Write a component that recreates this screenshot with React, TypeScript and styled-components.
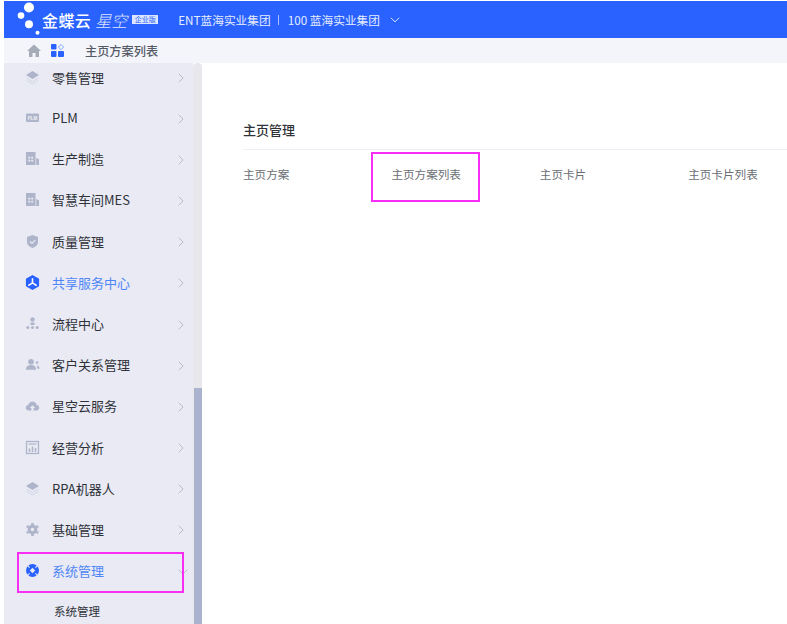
import React from "react";
import styled, { createGlobalStyle } from "styled-components";

const Global = createGlobalStyle`
  html, body { margin: 0; padding: 0; background: #fff; }
  body { font-family: "Noto Sans CJK SC", "Noto Sans", sans-serif; }
  * { box-sizing: border-box; }
`;

const Page = styled.div`
  width: 787px; height: 624px; overflow: hidden; background: #fff;
  padding: 1px 0 0 4px; display: flex; flex-direction: column; position: relative;
`;
const Header = styled.header`
  height: 37px; flex: none; background: #2962ff; color: #fff;
  display: flex; align-items: center; padding-left: 12px;
`;
const LogoMark = styled.svg`width: 26px; height: 35px; flex: none;`;
const Brand = styled.span`font-size: 16px; font-weight: 500; letter-spacing: .4px;`;
const BrandLight = styled.span`font-size: 16px; font-weight: 300; font-style: italic; opacity: .85; margin-left: 4px;`;
const Edition = styled.span`
  font-size: 7px; line-height: 9px; background: #dce6ff; color: #2962ff;
  margin-left: 5px; width: 26px; text-align: center; white-space: nowrap;
`;
const Org = styled.span`font-size: 11.7px; margin-left: 20px; display: flex; align-items: center; white-space: nowrap; color: #e6edff;`;
const Sep = styled.span`width: 1px; height: 10px; background: #a9c1fb; margin: 0 9px 0 7px;`;
const OrgCaret = styled.svg`width: 10px; height: 6px; margin-left: 10px;`;
const Crumb = styled.div`
  height: 25px; flex: none; background: #f4f5fa; display: flex; align-items: center; padding-left: 23px;
`;
const HomeIcon = styled.svg`width: 14px; height: 13px;`;
const AppsIcon = styled.svg`width: 13px; height: 13px; margin-left: 10px;`;
const CrumbText = styled.span`font-size: 12.2px; font-weight: 500; color: #555b66; margin-left: 21px;`;
const Body = styled.div`flex: 1; display: flex; min-height: 0;`;
const Sidebar = styled.nav`
  width: 189px; flex: none; background: #e9eaf4; overflow: hidden; padding-left: 21px;
`;
const Row = styled.div<{ $active?: boolean }>`
  height: 41.2px; display: flex; align-items: center; font-size: 13px;
  color: ${(p) => (p.$active ? "#4f86f7" : "#2f3238")};
`;
const FirstRow = styled(Row)`height: 34px; padding-bottom: 6px;`;
const IconBox = styled.span`width: 27px; flex: none; display: flex; align-items: center;`;
const Label = styled.span`flex: 1; white-space: nowrap;`;
const Chevron = styled.svg`width: 6px; height: 10px; flex: none; margin: 2px 9px 0 0;`;
const ChevronDown = styled.svg`width: 10px; height: 6px; flex: none; margin: 2px 5px 0 0;`;
const Sub = styled.div`font-size: 11.5px; color: #2f3238; padding-left: 29px; margin-top: 12px;`;
const Track = styled.div`
  width: 9px; flex: none; background: #e8e8ec; border-radius: 4px 4px 0 0; position: relative;
`;
const Thumb = styled.div`position: absolute; left: 1px; right: 0; top: 325px; bottom: 0; background: #a9b3cd;`;
const Main = styled.main`flex: 1; padding: 50px 0 0 41px; min-width: 0;`;
const Title = styled.h2`
  margin: 0; height: 37px; font-size: 13px; font-weight: 500; color: #2f3238; line-height: 34px;
  border-bottom: 1.5px solid #eceef5;
`;
const Tabs = styled.div`display: grid; grid-template-columns: repeat(4, 148.4px); margin-top: 16px;`;
const Tab = styled.div`font-size: 11.6px; color: #6a6d73; line-height: 16px; white-space: nowrap;`;
const Frame = styled.div<{ $x: number; $y: number; $w: number; $h: number }>`
  position: absolute; left: ${(p) => p.$x}px; top: ${(p) => p.$y}px;
  width: ${(p) => p.$w}px; height: ${(p) => p.$h}px; border: 2.5px solid #f92ef5; pointer-events: none;
`;

const c = "#aeb5ca";
const blue = "#2962ff";
const Ic = styled.svg`width: 15px; height: 15px; display: block;`;
const Layers = () => (
  <Ic viewBox="0 0 15 15"><path d="M7.5 1 14 5l-6.500 4L1 5z" fill={c}/><path d="M1.500 8l6 3.600L13.500 8M1.500 10.500l6 3.600 6-3.600" fill="none" stroke="#d2d6e4" strokeWidth="1"/></Ic>
);
const Plm = () => (
  <Ic viewBox="0 0 15 15"><rect x="1" y="3.500" width="13" height="8.500" rx="1" fill={c}/><text x="7.500" y="9.500" textAnchor="middle" fontSize="4.500" fontFamily="Liberation Sans, sans-serif" fontWeight="700" fill="#f1f2f8">PLM</text></Ic>
);
const Factory = () => (
  <Ic viewBox="0 0 15 15"><path d="M1 1h9.500v13H1zM11.200 7l2.800 1.200V14h-2.800z" fill={c}/><path d="M3.200 5.800h2v1.800h-2zM6.200 5.800h2v1.800h-2zM3.200 8.800h2v1.800h-2zM6.200 8.800h2v1.800h-2z" fill="#e9eaf4"/></Ic>
);
const Shield = () => (
  <Ic viewBox="0 0 15 15"><path d="M7.500 1 13 3v5c0 3-2.500 5-5.500 6C4.500 13 2 11 2 8V3z" fill={c}/><path d="m5 7.500 2 2 3.200-3.400" fill="none" stroke="#e9eaf4" strokeWidth="1.200"/></Ic>
);
const Shared = () => (
  <Ic viewBox="0 0 15 15"><path d="M7.500.8 13.400 4.200v6.600L7.500 14.200 1.600 10.800V4.200z" fill={blue} stroke={blue} strokeWidth="1.400" strokeLinejoin="round"/><path d="M7.500 3.200v4.600M7.500 7.800 3.300 10.600M7.500 7.800l4.200 2.800" stroke="#fff" strokeWidth="1.600" fill="none"/></Ic>
);
const Flow = () => (
  <Ic viewBox="0 0 15 15"><circle cx="7.500" cy="3.500" r="2.200" fill={c}/><path d="M5.500 6.500h4v2.500h-4z" fill={c}/><circle cx="2.800" cy="11.500" r="1.500" fill={c}/><circle cx="7.500" cy="11.500" r="1.500" fill={c}/><circle cx="12.200" cy="11.500" r="1.500" fill={c}/></Ic>
);
const People = () => (
  <Ic viewBox="0 0 15 15"><circle cx="6" cy="4.800" r="2.800" fill={c}/><path d="M.8 12.800c0-3.200 2-4.800 5.200-4.800s5.200 1.600 5.200 4.800z" fill={c}/><circle cx="12" cy="5.500" r="1.300" fill={c}/><path d="M12 8.300c1.400.4 2.500 1.700 2.500 3.500H12.400z" fill={c}/></Ic>
);
const Cloud = () => (
  <Ic viewBox="0 0 15 15"><path d="M3.600 12.500C1.800 12.500.8 11.200.8 9.700.8 8.200 2 7 3.300 7c.5-2.200 2.200-3.500 4.200-3.500S11.200 4.800 11.600 7c1.500 0 2.600 1.200 2.600 2.700 0 1.500-1.100 2.800-2.700 2.800z" fill={c}/><path d="M7.500 7.200 10.300 10H8.600v2.800H6.400V10H4.700z" fill="#e9eaf4"/></Ic>
);
const Chart = () => (
  <Ic viewBox="0 0 15 15"><rect x="1.500" y="1.500" width="12" height="12" fill="none" stroke={c} strokeWidth="1.300"/><path d="M3.500 4h8" stroke={c} strokeWidth="1.200"/><path d="M4.500 12V8.500M7.500 12V6.500M10.500 12V8" stroke={c} strokeWidth="1.500"/></Ic>
);
const Gear = () => (
  <Ic viewBox="0 0 15 15"><circle cx="7.500" cy="7.500" r="3.300" fill="none" stroke={c} strokeWidth="3"/><path d="M7.500 1v2M7.500 12v2M1.800 4.200l1.700 1M11.500 9.800l1.700 1M1.800 10.800l1.700-1M11.500 5.200l1.700-1" stroke={c} strokeWidth="2.600"/></Ic>
);
const SystemIcon = () => (
  <Ic viewBox="0 0 15 15"><circle cx="7.500" cy="7.500" r="6.500" fill={blue}/><path d="M7.500 4.800 10.200 7.500 7.500 10.200 4.800 7.500z" fill="#e9eaf4"/><path d="M7.500 1v2.400M7.500 11.600V14M1 7.500h2.400M11.600 7.500H14" stroke="#e9eaf4" strokeWidth="1.100" transform="rotate(45 7.500 7.500)"/></Ic>
);

const Right = () => (
  <Chevron viewBox="0 0 6 10"><path d="m.7.7 4.400 4.300L.7 9.300" fill="none" stroke="#b4b7c2" strokeWidth=".9"/></Chevron>
);
const Down = () => (
  <ChevronDown viewBox="0 0 10 6"><path d="m.7.700 4.300 4.400L9.300.7" fill="none" stroke="#b4b7c2" strokeWidth=".9"/></ChevronDown>
);

const items: [React.ReactNode, string, boolean?][] = [
  [<Plm />, "PLM"],
  [<Factory />, "生产制造"],
  [<Factory />, "智慧车间MES"],
  [<Shield />, "质量管理"],
  [<Shared />, "共享服务中心", true],
  [<Flow />, "流程中心"],
  [<People />, "客户关系管理"],
  [<Cloud />, "星空云服务"],
  [<Chart />, "经营分析"],
  [<Layers />, "RPA机器人"],
  [<Gear />, "基础管理"],
];

export default function App() {
  return (
    <Page>
      <Global />
      <Header>
        <LogoMark viewBox="0 0 26 35">
          <circle cx="13" cy="5.500" r="5" fill="#fff"/>
          <circle cx="5" cy="13.600" r="3.300" fill="#fff"/>
          <circle cx="13" cy="22.300" r="4" fill="#fff"/>
          <circle cx="21.500" cy="30.700" r="2" fill="#fff"/>
        </LogoMark>
        <Brand>金蝶云</Brand>
        <BrandLight>星空</BrandLight>
        <Edition>企业版</Edition>
        <Org>ENT蓝海实业集团<Sep />100 蓝海实业集团
          <OrgCaret viewBox="0 0 10 6"><path d="m.8.8 4.200 4 4.200-4" fill="none" stroke="#dbe5ff" strokeWidth="1"/></OrgCaret>
        </Org>
      </Header>
      <Crumb>
        <HomeIcon viewBox="0 0 14 13"><path d="M7 .5 14 7h-2v6H8.500V9h-3v4H2V7H0z" fill="#a6abb8"/></HomeIcon>
        <AppsIcon viewBox="0 0 13 13"><rect x="0" y="0" width="5.500" height="5.500" rx="1" fill={blue}/><rect x="0" y="7" width="5.500" height="6" rx="1" fill={blue}/><rect x="7" y="7" width="6" height="6" rx="1" fill={blue}/><path d="m10 .5 2.600 2.600L10 5.700 7.400 3.100z" fill="none" stroke="#7aa2fa" strokeWidth="1"/></AppsIcon>
        <CrumbText>主页方案列表</CrumbText>
      </Crumb>
      <Body>
        <Sidebar>
          <FirstRow><IconBox><Layers /></IconBox><Label>零售管理</Label><Right /></FirstRow>
          {items.map(([icon, text, active]) => (
            <Row key={text} $active={active}><IconBox>{icon}</IconBox><Label>{text}</Label><Right /></Row>
          ))}
          <Row $active><IconBox><SystemIcon /></IconBox><Label>系统管理</Label><Down /></Row>
          <Sub>系统管理</Sub>
        </Sidebar>
        <Track><Thumb /></Track>
        <Main>
          <Title>主页管理</Title>
          <Tabs>
            <Tab>主页方案</Tab>
            <Tab>主页方案列表</Tab>
            <Tab>主页卡片</Tab>
            <Tab>主页卡片列表</Tab>
          </Tabs>
        </Main>
      </Body>
      <Frame $x={371} $y={152} $w={109} $h={50} />
      <Frame $x={17} $y={552} $w={167} $h={41} />
    </Page>
  );
}
